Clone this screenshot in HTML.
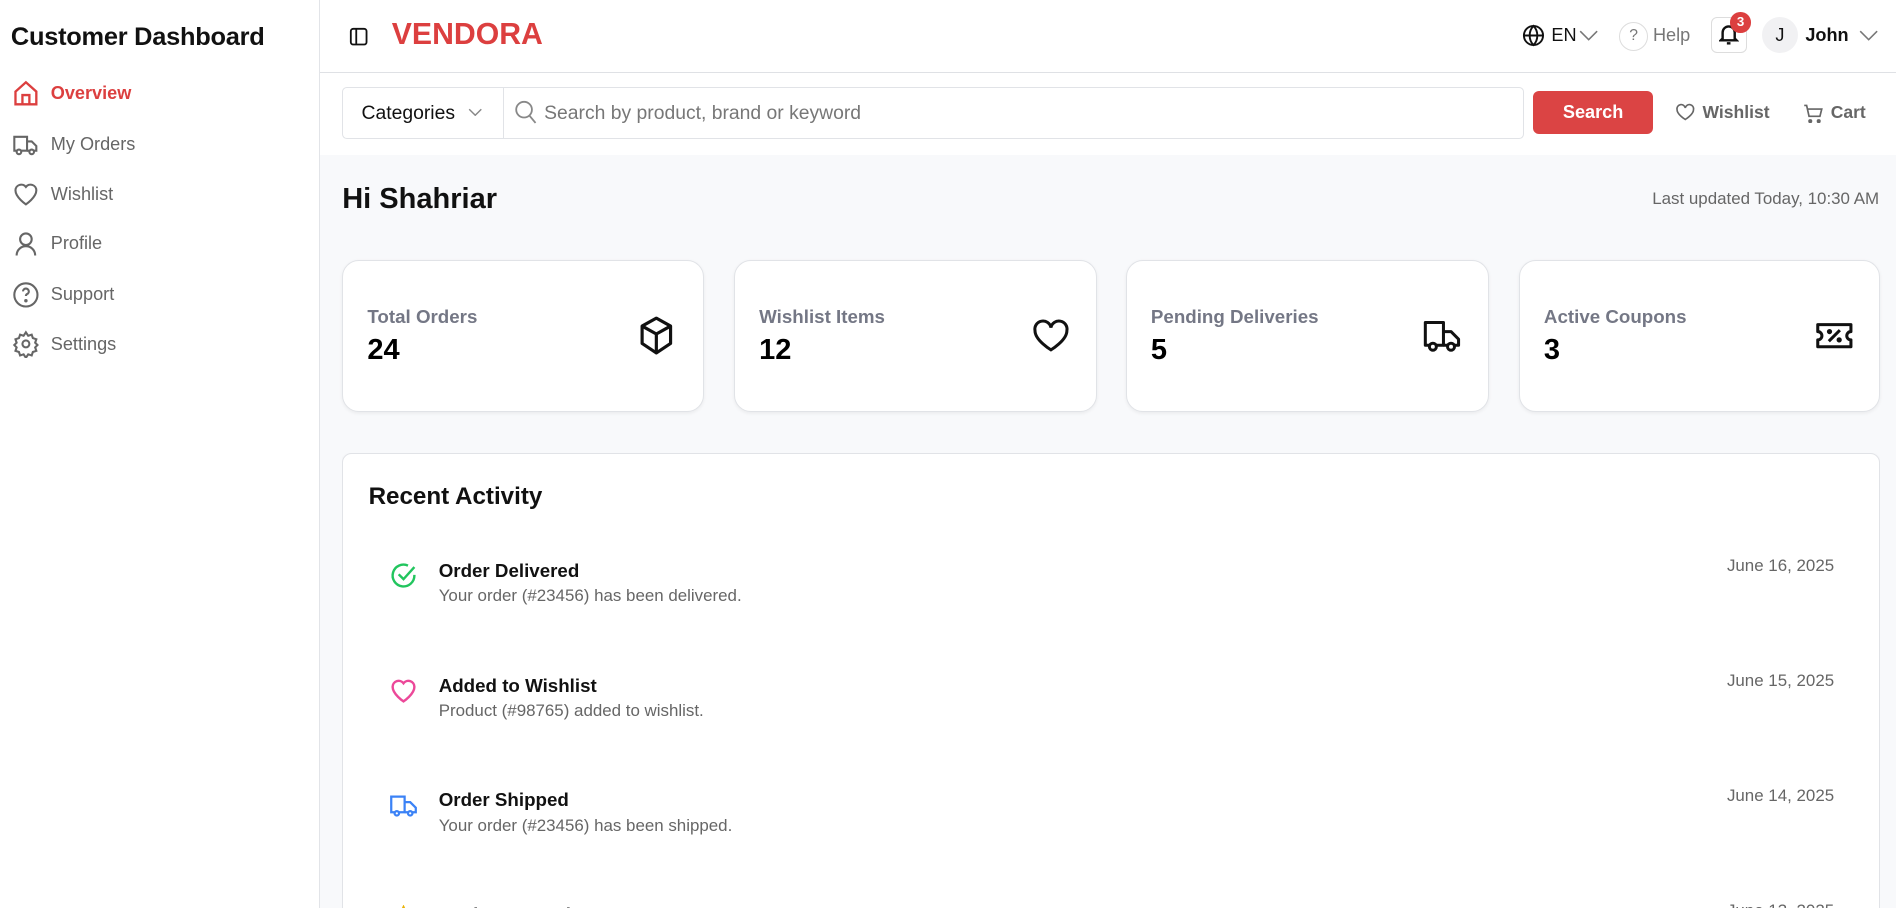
<!DOCTYPE html>
<html><head><meta charset="utf-8">
<style>
*{box-sizing:border-box;margin:0;padding:0}
html,body{width:1896px;height:908px;overflow:hidden;background:#fff}
#r{zoom:1.2092;width:1568px;height:751px;position:relative;font-family:"Liberation Sans",sans-serif;color:#111;overflow:hidden}
.a{position:absolute}
.side{left:0;top:0;width:265px;height:751px;border-right:1px solid #e2e4e8;background:#fff}
.nav{left:10px;display:flex;align-items:center;gap:9px;font-size:15px;color:#666}
.nav svg{width:23px;height:23px}
.main{left:265px;top:128px;width:1303px;height:623px;background:#f8f9fb}
.card{background:#fff;border:1px solid #e1e3e7;border-radius:14px;box-shadow:0 1px 3px rgba(0,0,0,.06)}
.lbl{font-size:15.5px;color:#5c6070;font-weight:bold;opacity:.85}
.val{font-size:24px;font-weight:bold;color:#000}
.it{left:38px;width:1195px;height:60px}
.it .t{position:absolute;left:41px;top:-8px;font-size:15.5px;font-weight:bold;color:#111}
.it .d{position:absolute;left:41px;top:14px;font-size:14px;color:#666}
.it .dt{position:absolute;right:0;top:-11px;font-size:14px;color:#666}
.it svg{position:absolute;left:0;top:-7px;width:24px;height:24px}
</style></head><body><div id="r">
<div class="a side">
 <div class="a" style="left:9px;top:19px;font-size:21px;font-weight:bold;letter-spacing:-.2px">Customer Dashboard</div>
 <div class="a nav" style="top:66px;color:#dc3f3f;font-weight:bold"><svg viewBox="0 0 24 24" fill="none" stroke="#dc3f3f" stroke-width="2"><path d="M3 10l9-8 9 8v11H3z"/><path d="M9 21v-8h6v8"/></svg>Overview</div>
 <div class="a nav" style="top:108px"><svg viewBox="0 0 24 24" fill="none" stroke="#666" stroke-width="1.8"><path d="M2 5h11v12H2z"/><path d="M13 9h4l4 4v4h-8"/><circle cx="6" cy="18" r="2" fill="#fff"/><circle cx="17" cy="18" r="2" fill="#fff"/></svg>My Orders</div>
 <div class="a nav" style="top:149px"><svg viewBox="0 0 24 24" fill="none" stroke="#666" stroke-width="1.8"><path d="M12 21s-9-6-9-12a5 5 0 0 1 9-3 5 5 0 0 1 9 3c0 6-9 12-9 12z"/></svg>Wishlist</div>
 <div class="a nav" style="top:190px"><svg viewBox="0 0 24 24" fill="none" stroke="#666" stroke-width="1.8"><circle cx="12" cy="8" r="5"/><path d="M4 22c0-5 4-8 8-8s8 3 8 8"/></svg>Profile</div>
 <div class="a nav" style="top:232px"><svg viewBox="0 0 24 24" fill="none" stroke="#666" stroke-width="1.8"><circle cx="12" cy="12" r="10"/><path d="M9.5 9a2.5 2.5 0 1 1 3.5 2.3c-.7.4-1 1-1 1.7"/><circle cx="12" cy="17" r=".6" fill="#666"/></svg>Support</div>
 <div class="a nav" style="top:273px"><svg viewBox="0 0 24 24" fill="none" stroke="#666" stroke-width="1.8"><circle cx="12" cy="12" r="3"/><path d="M12 2l2 3 3-1 1 3 3 1-1 3 2 2-2 2 1 3-3 1-1 3-3-1-2 3-2-3-3 1-1-3-3-1 1-3-2-2 2-2-1-3 3-1 1-3 3 1z"/></svg>Settings</div>
</div>
<div class="a" style="left:265px;top:0;width:1303px;height:60px;border-bottom:1px solid #dfe1e5;background:#fff"></div>
<svg class="a" style="left:289px;top:22px" width="16" height="16" viewBox="0 0 16 16" fill="none" stroke="#111" stroke-width="1.5"><rect x="1.5" y="1.5" width="13" height="13" rx="2"/><path d="M6 2v12"/></svg>
<div class="a" style="left:324px;top:15px;font-size:25px;font-weight:bold;color:#dc3f3f">VENDORA</div>
<svg class="a" style="left:1259px;top:20px" width="19" height="19" viewBox="0 0 24 24" fill="none" stroke="#111" stroke-width="2"><circle cx="12" cy="12" r="10"/><path d="M2 12h20M12 2c3 3 4 7 4 10s-1 7-4 10c-3-3-4-7-4-10s1-7 4-10z"/></svg>
<div class="a" style="left:1283px;top:21px;font-size:15px">EN</div>
<svg class="a" style="left:1306px;top:25px" width="16" height="9" viewBox="0 0 16 9" fill="none" stroke="#777" stroke-width="1.3"><path d="M1 1l7 7 7-7"/></svg>
<div class="a" style="left:1339px;top:18px;width:24px;height:24px;border:1.5px solid #ddd;border-radius:50%;font-size:13px;color:#777;text-align:center;line-height:21px">?</div>
<div class="a" style="left:1367px;top:21px;font-size:15px;color:#777">Help</div>
<div class="a" style="left:1415px;top:14px;width:30px;height:30px;border:1.5px solid #ddd;border-radius:5px"></div>
<svg class="a" style="left:1422px;top:20px" width="16" height="17" viewBox="0 0 16 17" fill="none" stroke="#111" stroke-width="2"><path d="M3 12V7a5 5 0 0 1 10 0v5l1.5 1.5h-13z"/><path d="M6.5 16h3"/></svg>
<div class="a" style="left:1431px;top:10px;width:17px;height:17px;border-radius:50%;background:#dc3f3f;color:#fff;font-size:11px;text-align:center;line-height:17px;font-weight:bold">3</div>
<div class="a" style="left:1457px;top:14px;width:30px;height:30px;border-radius:50%;background:#f1f1f3;font-size:15px;text-align:center;line-height:30px">J</div>
<div class="a" style="left:1493px;top:21px;font-size:15px;font-weight:bold">John</div>
<svg class="a" style="left:1537px;top:25px" width="16" height="9" viewBox="0 0 16 9" fill="none" stroke="#777" stroke-width="1.3"><path d="M1 1l7 7 7-7"/></svg>
<div class="a" style="left:265px;top:60px;width:1303px;height:69px;border-bottom:1px solid #dfe1e5;background:#fff"></div>
<div class="a" style="left:283px;top:72px;width:977px;height:43px;border:1px solid #e1e3e7;border-radius:4px"></div>
<div class="a" style="left:416px;top:73px;width:1px;height:41px;background:#e1e3e7"></div>
<div class="a" style="left:299px;top:84px;font-size:16px">Categories</div>
<svg class="a" style="left:387px;top:89px" width="12" height="7" viewBox="0 0 12 7" fill="none" stroke="#888" stroke-width="1.2"><path d="M1 1l5 5 5-5"/></svg>
<svg class="a" style="left:426px;top:83px" width="18" height="20" viewBox="0 0 18 20" fill="none" stroke="#888" stroke-width="1.5"><circle cx="7.5" cy="8" r="6.5"/><path d="M12 13l5 6"/></svg>
<div class="a" style="left:450px;top:84px;font-size:16px;color:#777">Search by product, brand or keyword</div>
<div class="a" style="left:1268px;top:75px;width:99px;height:36px;background:#db4444;border-radius:5px;color:#fff;font-size:15px;font-weight:bold;text-align:center;line-height:36px">Search</div>
<svg class="a" style="left:1385px;top:85px" width="17" height="15" viewBox="0 0 24 22" fill="none" stroke="#666" stroke-width="2"><path d="M12 20s-10-6-10-12a5 5 0 0 1 10-2 5 5 0 0 1 10 2c0 6-10 12-10 12z"/></svg>
<div class="a" style="left:1408px;top:84px;font-size:14.5px;font-weight:bold;color:#666">Wishlist</div>
<svg class="a" style="left:1491px;top:85px" width="17" height="17" viewBox="0 0 17 17" fill="none" stroke="#666" stroke-width="1.4"><path d="M1 2h2l2 9h9l1.5-6H4"/><circle cx="6" cy="15" r="1" fill="#666"/><circle cx="13" cy="15" r="1" fill="#666"/></svg>
<div class="a" style="left:1514px;top:84px;font-size:14.5px;font-weight:bold;color:#666">Cart</div>
<div class="a main"></div>
<div class="a" style="left:283px;top:151px;font-size:24px;font-weight:bold">Hi Shahriar</div>
<div class="a" style="right:14px;top:156px;font-size:14px;color:#666">Last updated Today, 10:30 AM</div>

<div class="a card" style="left:283px;top:215px;width:299px;height:126px"><div class="a lbl" style="left:20px;top:37px">Total Orders</div><div class="a val" style="left:20px;top:60px">24</div>
<svg class="a" style="left:243px;top:45px" width="32" height="34" viewBox="0 0 24 26" fill="none" stroke="#111" stroke-width="2" stroke-linejoin="round"><path d="M12 2l9 5v11l-9 6-9-6V7z"/><path d="M3 7l9 5 9-5M12 12v12"/></svg></div>
<div class="a card" style="left:607px;top:215px;width:300px;height:126px"><div class="a lbl" style="left:20px;top:37px">Wishlist Items</div><div class="a val" style="left:20px;top:60px">12</div>
<svg class="a" style="left:245px;top:47px" width="33" height="29" viewBox="0 0 24 22" fill="none" stroke="#111" stroke-width="1.9"><path d="M12 20s-10-6-10-12a5 5 0 0 1 10-2 5 5 0 0 1 10 2c0 6-10 12-10 12z"/></svg></div>
<div class="a card" style="left:931px;top:215px;width:300px;height:126px"><div class="a lbl" style="left:20px;top:37px">Pending Deliveries</div><div class="a val" style="left:20px;top:60px">5</div>
<svg class="a" style="left:244px;top:47px" width="33" height="30" viewBox="0 0 26 24" fill="none" stroke="#111" stroke-width="2" stroke-linejoin="round"><path d="M2 3h12v15H2z"/><path d="M14 9h5l5 5v4H14"/><circle cx="7" cy="19" r="2.3" fill="#fff"/><circle cx="19" cy="19" r="2.3" fill="#fff"/></svg></div>
<div class="a card" style="left:1256px;top:215px;width:299px;height:126px"><div class="a lbl" style="left:20px;top:37px">Active Coupons</div><div class="a val" style="left:20px;top:60px">3</div>
<svg class="a" style="left:244px;top:49px" width="32" height="26" viewBox="0 0 28 22" fill="none" stroke="#111" stroke-width="2.2" stroke-linejoin="round"><path d="M2 3h24v5a3 3 0 0 0 0 6v5H2v-5a3 3 0 0 0 0-6z"/><path d="M10 15l8-8"/><circle cx="10.5" cy="8" r=".8" fill="#111"/><circle cx="17.5" cy="14" r=".8" fill="#111"/></svg></div>

<div class="a" style="left:283px;top:375px;width:1272px;height:376px;overflow:hidden">
<div class="a card" style="left:0;top:0;width:1272px;height:420px;border-radius:8px">
 <div class="a" style="left:21px;top:24px;font-size:20px;font-weight:bold">Recent Activity</div>
 <div class="a it" style="top:95px"><svg viewBox="0 0 24 24" fill="none" stroke="#22c55e" stroke-width="2"><path d="M21 11.5V12a9 9 0 1 1-5.3-8.2"/><path d="M8 11l4 4 9-10"/></svg><div class="t">Order Delivered</div><div class="d">Your order (#23456) has been delivered.</div><div class="dt">June 16, 2025</div></div>
 <div class="a it" style="top:190px"><svg viewBox="0 0 24 24" fill="none" stroke="#ec4899" stroke-width="2"><path d="M12 21s-9-6-9-12a5 5 0 0 1 9-3 5 5 0 0 1 9 3c0 6-9 12-9 12z"/></svg><div class="t">Added to Wishlist</div><div class="d">Product (#98765) added to wishlist.</div><div class="dt">June 15, 2025</div></div>
 <div class="a it" style="top:285px"><svg viewBox="0 0 26 24" fill="none" stroke="#3b82f6" stroke-width="2"><path d="M2 4h12v14H2z"/><path d="M14 9h5l5 5v4H14"/><circle cx="7" cy="19" r="2" fill="#fff"/><circle cx="19" cy="19" r="2" fill="#fff"/></svg><div class="t">Order Shipped</div><div class="d">Your order (#23456) has been shipped.</div><div class="dt">June 14, 2025</div></div>
 <div class="a it" style="top:380px"><svg viewBox="0 0 24 24" fill="none" stroke="#eab308" stroke-width="2"><path d="M12 2l3 6.5 7 1-5 5 1.2 7L12 18l-6.2 3.5L7 14.5l-5-5 7-1z"/></svg><div class="t">Review Posted</div><div class="d">You reviewed a product.</div><div class="dt">June 13, 2025</div></div>
</div>
</div>
</div></body></html>
